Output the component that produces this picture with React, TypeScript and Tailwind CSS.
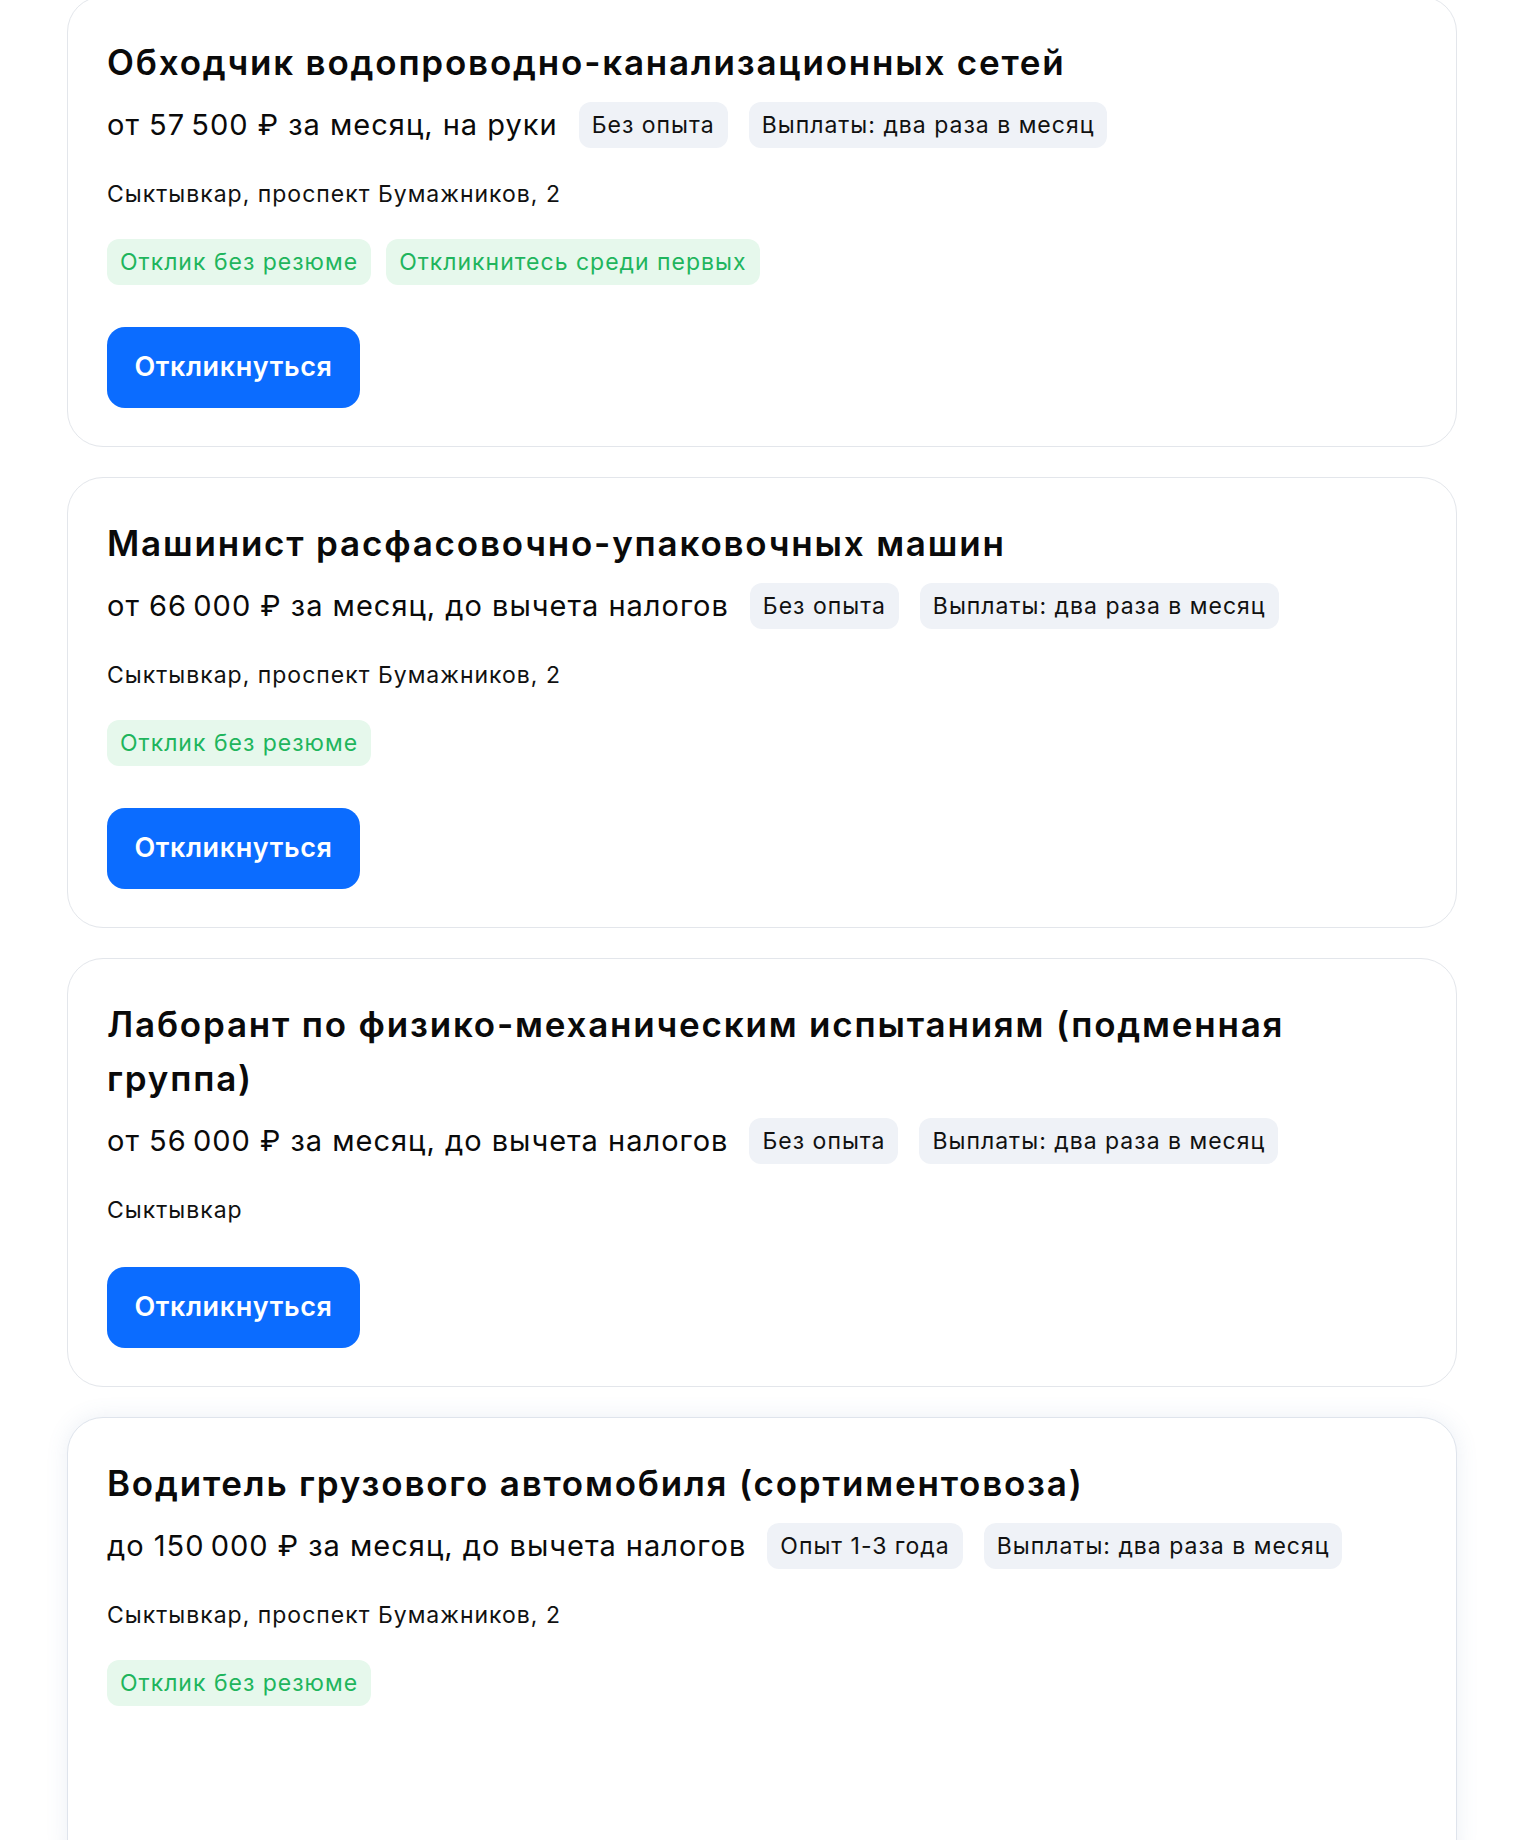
import React from 'react';

type Vacancy = {
  title: string;
  salary: string;
  experience: string;
  address: string;
  badges: string[];
  highlighted?: boolean;
  showButton?: boolean;
};

const VACANCIES: Vacancy[] = [
  {
    title: 'Обходчик водопроводно-канализационных сетей',
    salary: 'от 57\u2009500 ₽ за месяц, на руки',
    experience: 'Без опыта',
    address: 'Сыктывкар, проспект Бумажников, 2',
    badges: ['Отклик без резюме', 'Откликнитесь среди первых'],
    showButton: true,
  },
  {
    title: 'Машинист расфасовочно-упаковочных машин',
    salary: 'от 66\u2009000 ₽ за месяц, до вычета налогов',
    experience: 'Без опыта',
    address: 'Сыктывкар, проспект Бумажников, 2',
    badges: ['Отклик без резюме'],
    showButton: true,
  },
  {
    title: 'Лаборант по физико-механическим испытаниям (подменная группа)',
    salary: 'от 56\u2009000 ₽ за месяц, до вычета налогов',
    experience: 'Без опыта',
    address: 'Сыктывкар',
    badges: [],
    showButton: true,
  },
  {
    title: 'Водитель грузового автомобиля (сортиментовоза)',
    salary: 'до 150\u2009000 ₽ за месяц, до вычета налогов',
    experience: 'Опыт 1-3 года',
    address: 'Сыктывкар, проспект Бумажников, 2',
    badges: ['Отклик без резюме'],
    highlighted: true,
  },
];

function VacancyCard({ v }: { v: Vacancy }) {
  return (
    <div
      className={
        'rounded-[36px] border bg-white px-[39px] pt-[38px] pb-[38px] ' +
        (v.highlighted
          ? 'border-[#dfe4ec] shadow-[0_0_22px_rgba(90,120,170,0.12)] min-h-[460px]'
          : 'border-[#e3e6eb]')
      }
    >
      <h2 className="text-[35px] leading-[54px] font-semibold tracking-[1.8px] text-[#0a0a0a] max-w-[1220px]">
        {v.title}
      </h2>

      <div className="mt-[13px] flex flex-wrap items-center gap-x-[21px]">
        <span className="text-[29px] leading-[46px] tracking-[1px] text-[#0a0a0a]">{v.salary}</span>
        <span className="rounded-[12px] bg-[#eff2f7] px-[13px] h-[46px] flex items-center text-[23px] tracking-[1px] text-[#111]">
          {v.experience}
        </span>
        <span className="rounded-[12px] bg-[#eff2f7] px-[13px] h-[46px] flex items-center text-[23px] tracking-[1px] text-[#111]">
          Выплаты: два раза в месяц
        </span>
      </div>

      <div className="mt-[31px] text-[23px] leading-[30px] tracking-[1px] text-[#111]">{v.address}</div>

      {v.badges.length > 0 && (
        <div className="mt-[30px] flex flex-wrap gap-[15px]">
          {v.badges.map((b) => (
            <span
              key={b}
              className="rounded-[12px] bg-[#e6f8ec] px-[13px] h-[46px] flex items-center text-[23px] tracking-[1px] text-[#1fb55d]"
            >
              {b}
            </span>
          ))}
        </div>
      )}

      {v.showButton && (
        <button
          type="button"
          className="mt-[42px] h-[81px] w-[253px] rounded-[18px] bg-[#0b6cff] text-white text-[27px] tracking-[0.6px] font-semibold"
        >
          Откликнуться
        </button>
      )}
    </div>
  );
}

export default function App() {
  return (
    <div
      className="min-h-[1840px] bg-white overflow-hidden"
      style={{ fontFamily: 'Inter, "Noto Sans", sans-serif' }}
    >
      <div className="ml-[67px] w-[1390px] -mt-[4px] flex flex-col gap-[30px]">
        {VACANCIES.map((v) => (
          <VacancyCard key={v.title} v={v} />
        ))}
      </div>
    </div>
  );
}
